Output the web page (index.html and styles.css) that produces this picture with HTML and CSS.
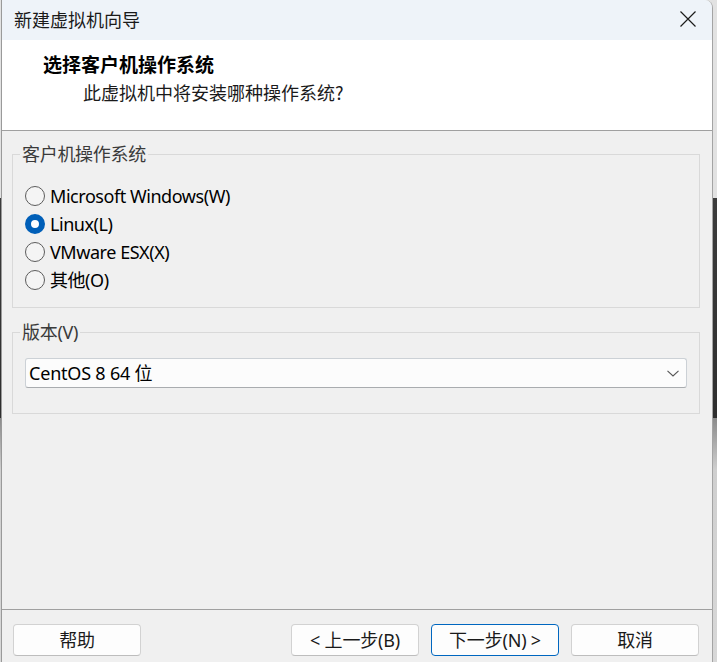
FILE: index.html
```html
<!DOCTYPE html>
<html lang="zh-CN">
<head>
<meta charset="utf-8">
<title>新建虚拟机向导</title>
<link rel="stylesheet" href="styles.css">
</head>
<body>
<div class="window">
  <div class="titlebar">
    <span class="title">新建虚拟机向导</span>
    <span class="close" aria-label="关闭">
      <svg width="16" height="16" viewBox="0 0 16 16"><path d="M0.5 0.5 L15.5 15.5 M15.5 0.5 L0.5 15.5" stroke="#1b1b1b" stroke-width="1.2" fill="none"/></svg>
    </span>
  </div>
  <div class="header">
    <div class="h-title">选择客户机操作系统</div>
    <div class="h-sub">此虚拟机中将安装哪种操作系统?</div>
  </div>
  <div class="main">
    <fieldset class="group os">
      <legend>客户机操作系统</legend>
      <label class="radio"><span class="dot"></span><span class="lbl">Microsoft Windows(W)</span></label>
      <label class="radio"><span class="dot checked"></span><span class="lbl">Linux(L)</span></label>
      <label class="radio"><span class="dot"></span><span class="lbl">VMware ESX(X)</span></label>
      <label class="radio"><span class="dot"></span><span class="lbl">其他(O)</span></label>
    </fieldset>
    <fieldset class="group version">
      <legend>版本(V)</legend>
      <div class="select">
        <span class="value">CentOS 8 64 位</span>
        <svg class="chev" width="12" height="7" viewBox="0 0 12 7"><path d="M0.5 0.8 L6 6 L11.5 0.8" stroke="#555" stroke-width="1.1" fill="none"/></svg>
      </div>
    </fieldset>
  </div>
  <div class="footer">
    <button class="btn">帮助</button>
    <div class="spacer"></div>
    <button class="btn">&lt; 上一步(B)</button>
    <button class="btn primary">下一步(N) &gt;</button>
    <button class="btn">取消</button>
  </div>
</div>
</body>
</html>
```
FILE: styles.css
```css
html, body {
  margin: 0;
  padding: 0;
  height: 662px;
  overflow: hidden;
}
body {
  background: linear-gradient(to bottom, #e2e2e2 0, #e2e2e2 198px, #3c3c3c 198px, #2e2e2e 418px, #8a8a8a 418px, #cfcfcf 470px, #d8d8d8 662px);
  font-family: "Noto Sans", "Noto Sans CJK SC", sans-serif;
  color: #000;
}
.window {
  box-sizing: border-box;
  width: 712px;
  height: 662px;
  margin-left: 1px;
  border-left: 1px solid #9a9a9a;
  border-right: 1px solid #a4a4a4;
  border-top-right-radius: 8px;
  background: #f0f0f0;
  display: flex;
  flex-direction: column;
  overflow: hidden;
}
.titlebar {
  height: 40px;
  flex: none;
  background: #eef3f9;
  display: flex;
  align-items: center;
  justify-content: space-between;
  padding: 0 16px 0 12px;
}
.title {
  font-family: "Noto Sans CJK SC", sans-serif;
  font-size: 18px;
  color: #1a1a1a;
  line-height: 24px;
  margin-top: -2px;
}
.close {
  display: flex;
  width: 16px;
  height: 16px;
  margin-top: -3px;
}
.header {
  height: 90px;
  flex: none;
  background: #fff;
  border-bottom: 1px solid #a0a0a0;
  box-sizing: content-box;
  display: flex;
  flex-direction: column;
}
.h-title {
  margin-top: 12px;
  padding-left: 41px;
  font-family: "Noto Sans CJK SC", sans-serif;
  font-weight: bold;
  font-size: 19px;
  line-height: 24px;
}
.h-sub {
  margin-top: 4px;
  padding-left: 81px;
  font-family: "Noto Sans CJK SC", sans-serif;
  font-size: 18px;
  line-height: 24px;
  color: #1a1a1a;
}
.main {
  flex: 1;
  padding: 11px 12px 0 10px;
  display: flex;
  flex-direction: column;
  gap: 12px;
}
.group {
  margin: 0;
  border: 1px solid #d9d9d9;
  padding: 0 12px;
  min-width: 0;
}
.group legend {
  margin-left: -5px;
  padding: 0 2px;
  font-family: "Noto Sans", "Noto Sans CJK SC", sans-serif;
  font-size: 18px;
  letter-spacing: -0.3px;
  line-height: 24px;
  color: #3a3a3a;
}
.os {
  padding-top: 16px;
  padding-bottom: 13px;
}
.radio {
  display: flex;
  align-items: center;
  height: 28px;
  font-size: 18px;
}
.dot {
  box-sizing: border-box;
  width: 20px;
  height: 20px;
  border-radius: 50%;
  border: 1px solid #5c5c5c;
  background: #f4f4f4;
  margin-right: 5px;
  flex: none;
}
.dot.checked {
  border: 6px solid #005fb8;
  background: #fff;
}
.lbl {
  line-height: 24px;
  letter-spacing: -0.45px;
}
.version {
  padding-top: 14px;
  padding-bottom: 25px;
}
.select {
  box-sizing: border-box;
  height: 30px;
  background: #fcfcfc;
  border: 1px solid #ccd1d6;
  border-bottom-color: #a9acaf;
  border-radius: 3px;
  display: flex;
  align-items: center;
  justify-content: space-between;
  padding: 0 7px 0 3px;
}
.value {
  font-size: 18px;
  letter-spacing: -0.2px;
  line-height: 24px;
}
.chev {
  display: block;
}
.footer {
  flex: none;
  height: 38px;
  border-top: 1px solid #a0a0a0;
  display: flex;
  align-items: flex-start;
  gap: 12px;
  padding: 14px 13px 0 11px;
  box-sizing: content-box;
}
.spacer {
  flex: 1;
}
.btn {
  width: 128px;
  height: 32px;
  flex: none;
  box-sizing: border-box;
  background: #fdfdfd;
  border: 1px solid #d2d2d2;
  border-bottom-color: #bdbdbd;
  border-radius: 4px;
  font-family: "Noto Sans", "Noto Sans CJK SC", sans-serif;
  font-size: 18px;
  letter-spacing: -0.2px;
  color: #1a1a1a;
  padding: 0;
  line-height: 24px;
}
.btn.primary {
  border: 1px solid #0067c0;
}
```
